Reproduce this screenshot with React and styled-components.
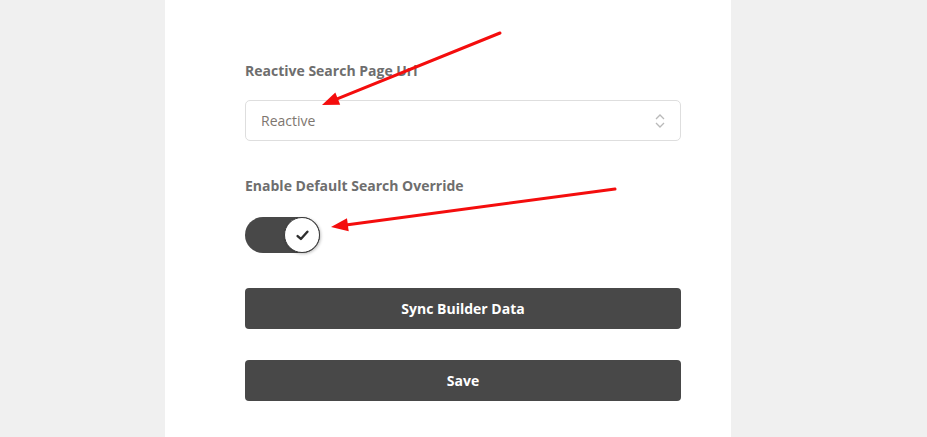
import React, {useState} from 'react';
import styled, {createGlobalStyle} from 'styled-components'

const GlobalStyle = createGlobalStyle`
    body{
        margin: 0;
        background: #f0f0f0;
        font-family: "Open Sans", "Noto Sans", sans-serif;
    }
`

function Arrow({from, to}){
    // la punta queda en "to", el cuerpo sale de "from"
    const dx = to[0] - from[0]
    const dy = to[1] - from[1]
    const len = Math.hypot(dx, dy)
    const ux = dx / len
    const uy = dy / len
    const bx = to[0] - ux * 17
    const by = to[1] - uy * 17
    const px = -uy * 6.5
    const py = ux * 6.5
    return(
        <g>
            <line x1={from[0]} y1={from[1]} x2={bx + ux * 2} y2={by + uy * 2} stroke="#f40d0d" strokeWidth="3" strokeLinecap="round"/>
            <polygon points={`${to[0]},${to[1]} ${bx + px},${by + py} ${bx - px},${by - py}`} fill="#f40d0d"/>
        </g>
    )
}

function App(){

    const [override, setOverride] = useState(true)

    return(
        <>
         <GlobalStyle/>
         <Page>
            <Panel>
                <Field>
                    <Label>Reactive Search Page Url</Label>
                    <Select>
                        <span>Reactive</span>
                        <svg width="12" height="18" viewBox="0 0 12 18" fill="none" stroke="#b9b9b9" strokeWidth="1.3">
                            <path d="M2 7 L6 3 L10 7"/>
                            <path d="M2 11 L6 15 L10 11"/>
                        </svg>
                    </Select>
                </Field>
                <Field>
                    <Label>Enable Default Search Override</Label>
                    <Toggle $on={override} onClick={() => setOverride(!override)}>
                        <Knob $on={override}>
                            <svg width="13" height="11" viewBox="0 0 12 10" fill="none" stroke="#2f2f2f" strokeWidth="2.2" strokeLinecap="round" strokeLinejoin="round">
                                <path d="M1.5 5.5 L4.5 8.2 L10.5 1.5"/>
                            </svg>
                        </Knob>
                    </Toggle>
                </Field>
                <Button>Sync Builder Data</Button>
                <Button>Save</Button>
            </Panel>
            <Arrows width="927" height="437" viewBox="0 0 927 437">
                <Arrow from={[500, 33]} to={[322, 105]}/>
                <Arrow from={[615, 189]} to={[331, 227]}/>
            </Arrows>
         </Page>
        </>
    );
}

export default App

const Page = styled.div`
    position: relative;
    width: 927px;
    height: 437px;
    overflow: hidden;
`

const Panel = styled.div`
    width: 566px;
    margin-left: 165px;
    height: 100%;
    box-sizing: border-box;
    background: #fff;
    padding: 61px 50px 0 80px;
    display: flex;
    flex-direction: column;
`

const Field = styled.div`
    display: flex;
    flex-direction: column;
    margin-bottom: 35px;
`

const Label = styled.label`
    font-size: 14px;
    line-height: 20px;
    font-weight: 700;
    color: #6e6e6e;
    margin-bottom: 19px;
`

const Select = styled.div`
    height: 41px;
    box-sizing: border-box;
    border: 1px solid #dedede;
    border-radius: 5px;
    display: flex;
    align-items: center;
    justify-content: space-between;
    padding: 0 14px 0 15px;
    span{
        font-size: 14px;
        color: #7e766f;
    }
`

const Toggle = styled.div`
    width: 75px;
    height: 36px;
    border-radius: 18px;
    background: ${p => p.$on ? '#484848' : '#d6d6d6'};
    position: relative;
    cursor: pointer;
    margin-top: 2px;
`

const Knob = styled.div`
    position: absolute;
    top: 0;
    left: ${p => p.$on ? '39px' : '0'};
    width: 36px;
    height: 36px;
    box-sizing: border-box;
    border-radius: 50%;
    background: #fff;
    border: 1.5px solid #3a3a3a;
    box-shadow: 1px 1px 3px rgba(0,0,0,.25);
    display: flex;
    align-items: center;
    justify-content: center;
`

const Button = styled.button`
    height: 41px;
    border: none;
    border-radius: 4px;
    background: #484848;
    color: #fff;
    font-family: inherit;
    font-size: 14px;
    font-weight: 700;
    margin-bottom: 31px;
    cursor: pointer;
`

const Arrows = styled.svg`
    position: absolute;
    top: 0;
    left: 0;
    pointer-events: none;
`
